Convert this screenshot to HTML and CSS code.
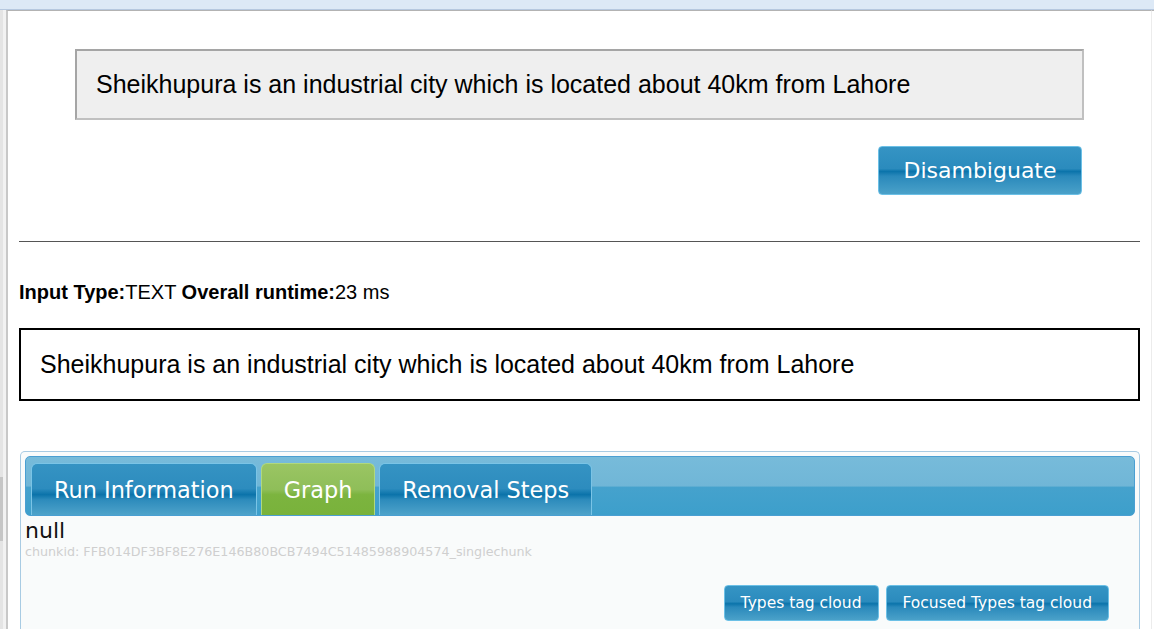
FILE: index.html
```html
<!DOCTYPE html>
<html>
<head>
<meta charset="utf-8">
<link rel="stylesheet" href="styles.css">
</head>
<body>
<div class="chrome-top"></div>
<div class="frame">
  <div class="gutter"><div class="gutter-thumb"></div></div>
  <div class="page">
    <div class="input-box">Sheikhupura is an industrial city which is located about 40km from Lahore</div>
    <div class="actions">
      <button class="btn btn-big">Disambiguate</button>
    </div>
    <hr class="rule">
    <p class="meta"><b>Input Type:</b>TEXT <b>Overall runtime:</b>23 ms</p>
    <div class="result-box">Sheikhupura is an industrial city which is located about 40km from Lahore</div>
    <div class="tabs">
      <div class="tab-bar">
        <div class="tab">Run Information</div>
        <div class="tab tab-active">Graph</div>
        <div class="tab">Removal Steps</div>
      </div>
      <div class="tab-body">
        <div class="null">null</div>
        <div class="chunk">chunkid: FFB014DF3BF8E276E146B80BCB7494C51485988904574_singlechunk</div>
        <div class="cloud-actions">
          <button class="btn btn-small">Types tag cloud</button>
          <button class="btn btn-small">Focused Types tag cloud</button>
        </div>
      </div>
    </div>
  </div>
  <div class="edge"></div>
</div>
</body>
</html>
```
FILE: styles.css
```css
html, body {
  margin: 0;
  padding: 0;
  background: #ffffff;
  overflow: hidden;
}
body {
  font-family: "Liberation Sans", Arial, sans-serif;
  height: 629px;
}
.chrome-top {
  height: 9px;
  background: #dde9f6;
  border-bottom: 1px solid #b6c8df;
}
.frame {
  display: flex;
  height: 619px;
  overflow: hidden;
}
.gutter {
  width: 3px;
  background: #e4e4e4;
  border-right: 3px solid #f2f2f2;
  position: relative;
}
.gutter-thumb {
  position: absolute;
  left: 0;
  top: 467px;
  width: 3px;
  height: 64px;
  background: #c6c6c6;
}
.page {
  flex: 1;
  border-left: 2px solid #c8c8c8;
  border-top: 1px solid #b3b3b3;
  padding: 0 11px;
  min-width: 0;
  overflow: hidden;
}
.edge {
  width: 2px;
  border-left: 1px solid #ececec;
  border-top: 1px solid #b3b3b3;
}
.input-box {
  width: 1009px;
  margin: 38px auto 0;
  box-sizing: border-box;
  height: 71px;
  border: 2px solid #a5a5a5;
  border-right-color: #c0c0c0;
  border-bottom-color: #c0c0c0;
  background: #efefef;
  font-size: 25px;
  line-height: 67px;
  padding-left: 19px;
  color: #000;
  white-space: nowrap;
}
.actions {
  display: flex;
  justify-content: flex-end;
  padding-right: 58px;
  margin-top: 26px;
}
.btn {
  font-family: "DejaVu Sans", Verdana, sans-serif;
  color: #ffffff;
  border: 1px solid #6cc0e6;
  border-radius: 4px;
  background: linear-gradient(to bottom, #3594c4 0%, #2b8bbd 46%, #0b74ab 52%, #2a89bb 62%, #4aa1c9 100%);
  cursor: pointer;
  padding: 0;
}
.btn-big {
  width: 204px;
  height: 49px;
  font-size: 22px;
}
.rule {
  border: 0;
  border-top: 1px solid #555555;
  margin: 46px 0 0;
  height: 0;
}
.meta {
  margin: 39px 0 0;
  font-size: 20px;
  line-height: 23px;
  color: #000;
}
.result-box {
  margin-top: 24px;
  height: 73px;
  box-sizing: border-box;
  border: 2px solid #000;
  font-size: 25px;
  line-height: 69px;
  padding-left: 19px;
  white-space: nowrap;
}
.tabs {
  margin-top: 50px;
  margin-left: 1px;
  border: 1px solid #a8cbe3;
  border-bottom: 0;
  border-radius: 5px 5px 0 0;
  background: #f9fbfb;
  padding: 4px 4px 0;
  height: 174px;
}
.tab-bar {
  display: flex;
  gap: 4px;
  height: 52px;
  padding: 6px 0 0 5px;
  border-radius: 5px;
  border: 1px solid #4a9fd2;
  background: linear-gradient(to bottom, #77bbda 0%, #70b6d7 50%, #45a2cd 52%, #3d9fcb 100%);
  overflow: hidden;
}
.tab {
  font-family: "DejaVu Sans", Verdana, sans-serif;
  color: #fff;
  font-size: 22.4px;
  line-height: 52px;
  padding: 0 22px;
  border-radius: 6px 6px 0 0;
  border: 1px solid #7ac4e6;
  border-bottom: 0;
  background: linear-gradient(to bottom, #3593c3 0%, #2d8cbe 48%, #0b73aa 60%, #2d8bbc 70%, #4ea3ca 100%);
  white-space: nowrap;
}
.tab-active {
  border-color: #b0d87e;
  background: linear-gradient(to bottom, #9ac563 0%, #8fbe59 50%, #7cb43f 60%, #79b23b 100%);
}
.tab-body {
  padding: 2px 0 0 0;
}
.null {
  font-family: "DejaVu Sans", Verdana, sans-serif;
  font-size: 22px;
  line-height: 26px;
  color: #111;
}
.chunk {
  font-family: "DejaVu Sans", Verdana, sans-serif;
  font-size: 12.7px;
  line-height: 16px;
  color: #cfcfcf;
}
.cloud-actions {
  display: flex;
  justify-content: flex-end;
  gap: 7px;
  margin-top: 25px;
  padding-right: 26px;
}
.btn-small {
  height: 36px;
  font-size: 15.5px;
  padding: 0 16px;
}
```
